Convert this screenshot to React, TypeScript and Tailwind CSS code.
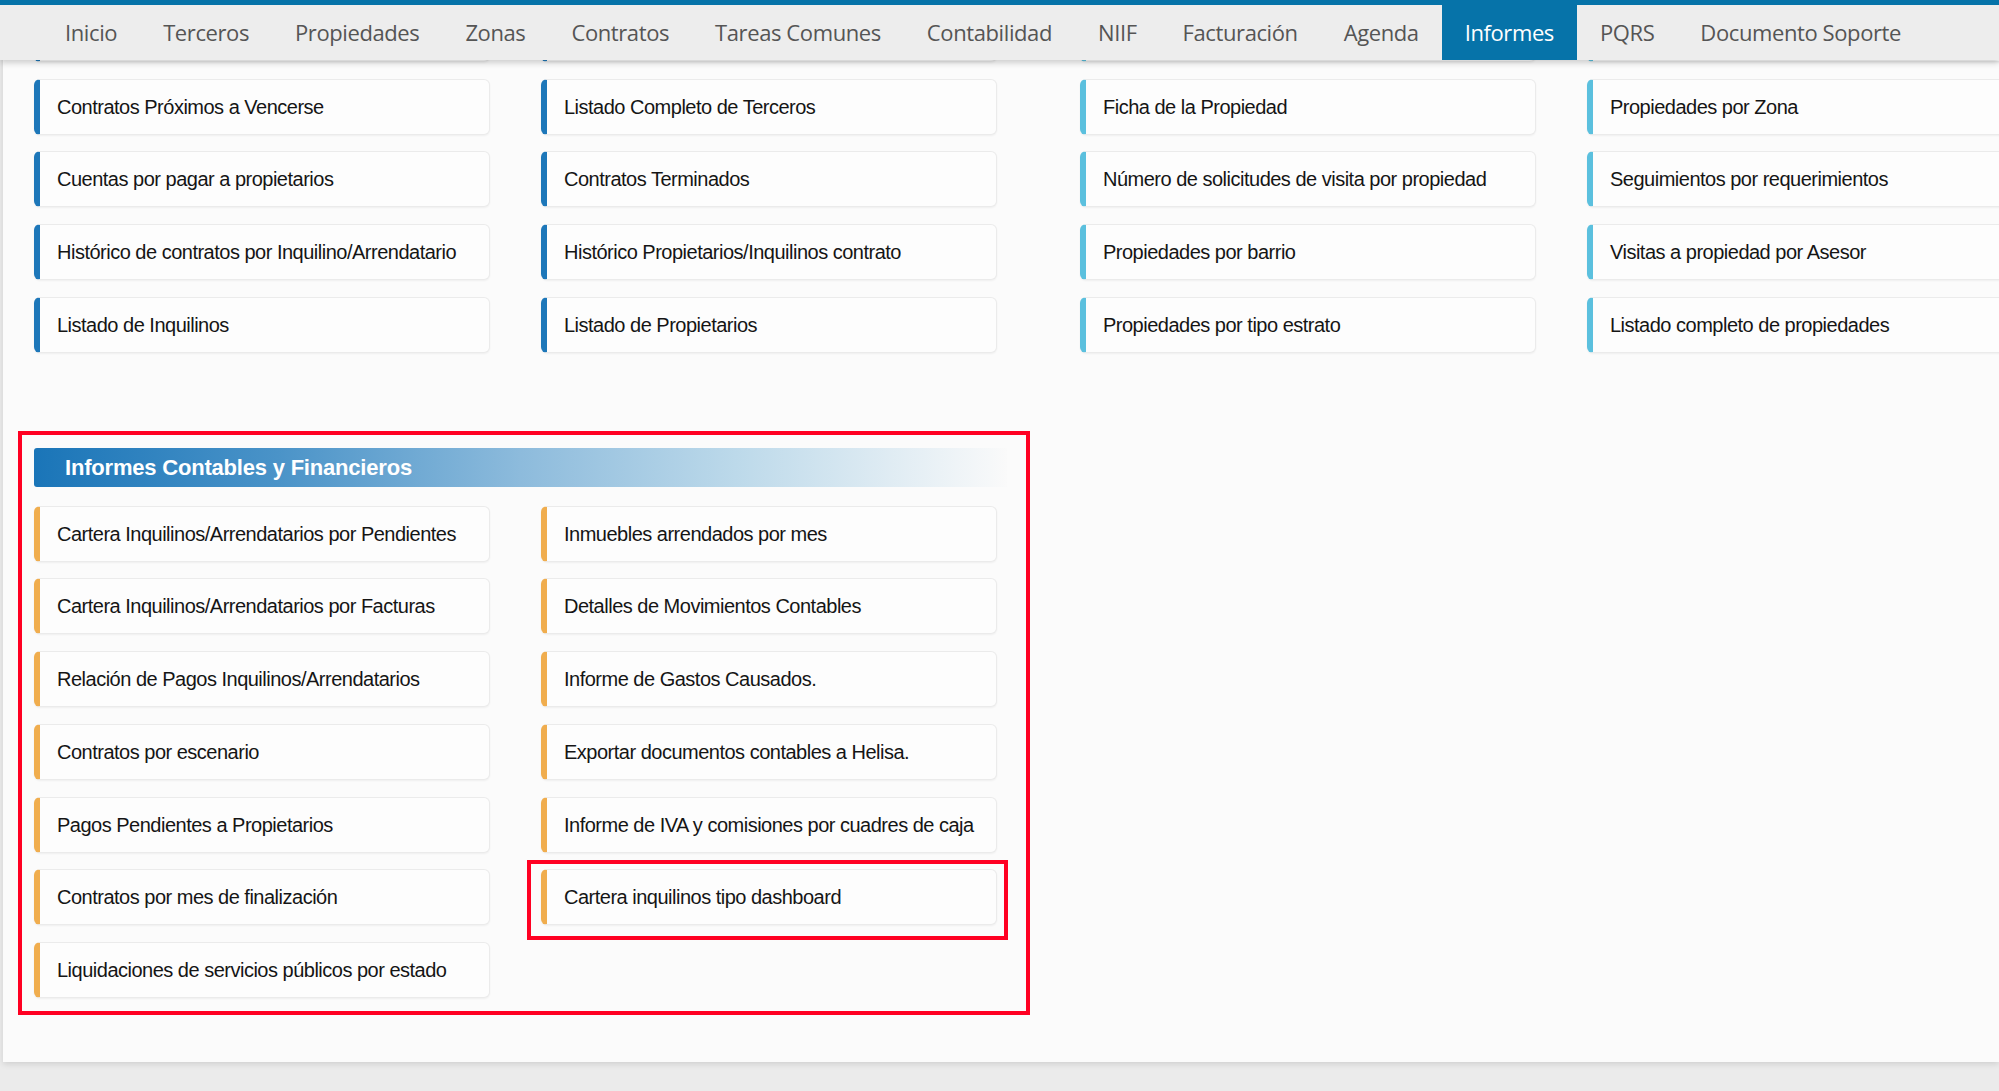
import React from 'react';

const navItems = [
  'Inicio', 'Terceros', 'Propiedades', 'Zonas', 'Contratos', 'Tareas Comunes',
  'Contabilidad', 'NIIF', 'Facturación', 'Agenda', 'Informes', 'PQRS', 'Documento Soporte',
];

// filas del bloque superior (la fila 0 queda oculta bajo la barra, sin texto)
const groupA = [
  [' ', ' '],
  ['Contratos Próximos a Vencerse', 'Listado Completo de Terceros'],
  ['Cuentas por pagar a propietarios', 'Contratos Terminados'],
  ['Histórico de contratos por Inquilino/Arrendatario', 'Histórico Propietarios/Inquilinos contrato'],
  ['Listado de Inquilinos', 'Listado de Propietarios'],
];

const groupB = [
  [' ', ' '],
  ['Ficha de la Propiedad', 'Propiedades por Zona'],
  ['Número de solicitudes de visita por propiedad', 'Seguimientos por requerimientos'],
  ['Propiedades por barrio', 'Visitas a propiedad por Asesor'],
  ['Propiedades por tipo estrato', 'Listado completo de propiedades'],
];

const contables = [
  ['Cartera Inquilinos/Arrendatarios por Pendientes', 'Inmuebles arrendados por mes'],
  ['Cartera Inquilinos/Arrendatarios por Facturas', 'Detalles de Movimientos Contables'],
  ['Relación de Pagos Inquilinos/Arrendatarios', 'Informe de Gastos Causados.'],
  ['Contratos por escenario', 'Exportar documentos contables a Helisa.'],
  ['Pagos Pendientes a Propietarios', 'Informe de IVA y comisiones por cuadres de caja'],
  ['Contratos por mes de finalización', 'Cartera inquilinos tipo dashboard'],
  ['Liquidaciones de servicios públicos por estado', ''],
];

const barColor: Record<string, string> = {
  dark: 'border-l-[#1d77b9]',
  light: 'border-l-[#5bc0de]',
  orange: 'border-l-[#f0ad4e]',
};

const ReportCard = ({ label, tone, marked }: { label: string; tone: string; marked?: boolean }) => (
  <div
    className={`relative h-[56px] flex items-center pl-[17px] bg-[#fdfdfd] border border-[#ebebeb] border-l-[6px] rounded-[6px] shadow-[0_1px_2px_rgba(0,0,0,0.05)] text-[20px] tracking-[-0.5px] text-[#151515] whitespace-nowrap ${barColor[tone]}`}
  >
    {label.trim()}
    {marked && (
      <div className="absolute -left-[20px] -right-[12px] -top-[10px] -bottom-[16px] border-4 border-[#ff0022] pointer-events-none" />
    )}
  </div>
);

const CardGrid = ({ rows, tone }: { rows: string[][]; tone: string }) => (
  <div className="w-[973px] shrink-0 grid grid-cols-[456px_456px] gap-x-[51px] gap-y-[16.7px]">
    {rows.flatMap((row, i) =>
      row.map((label, j) =>
        label ? (
          <ReportCard
            key={`${i}-${j}`}
            label={label}
            tone={tone}
            marked={label === 'Cartera inquilinos tipo dashboard'}
          />
        ) : (
          <div key={`${i}-${j}`} />
        )
      )
    )}
  </div>
);

export default function App() {
  return (
    <div
      className="relative w-[1999px] h-[1091px] overflow-hidden bg-[#ebebeb]"
      style={{ fontFamily: '"Liberation Sans", Arial, sans-serif' }}
    >
      {/* panel principal */}
      <div className="ml-[3px] h-[1062px] bg-[#fbfbfb] shadow-[0_2px_6px_rgba(0,0,0,0.12)] overflow-hidden">
        <div className="pt-[6px] pl-[31px]">
          <div className="flex gap-[73px]">
            <CardGrid rows={groupA} tone="dark" />
            <CardGrid rows={groupB} tone="light" />
          </div>

          {/* Informes Contables y Financieros */}
          <div className="relative w-[973px] mt-[95px]">
            <div className="h-[39px] flex items-center pl-[31px] rounded-l-[3px] bg-[linear-gradient(to_right,#1a75b8_0%,#4a93c8_25%,#8dbbdc_50%,#bcd9ea_72%,#fafafa_100%)]">
              <span className="text-white font-bold text-[22px] tracking-[-0.2px]">Informes Contables y Financieros</span>
            </div>
            <div className="mt-[19px]">
              <CardGrid rows={contables} tone="orange" />
            </div>
            <div className="absolute -left-[16px] -right-[23px] -top-[17px] -bottom-[17px] border-4 border-[#ff0022] pointer-events-none" />
          </div>
        </div>
      </div>

      {/* barra de navegación fija */}
      <div
        className="absolute top-0 left-0 right-0 h-[60px] border-t-[5px] border-[#0673a9] bg-[#ededed] shadow-[0_3px_6px_rgba(0,0,0,0.18)]"
        style={{ fontFamily: '"Open Sans", "Noto Sans", sans-serif' }}
      >
        <ul className="flex h-full pl-[42px]">
          {navItems.map((item) => (
            <li
              key={item}
              className={`flex items-center px-[23px] text-[22px] tracking-[-0.4px] ${
                item === 'Informes' ? 'bg-[#0673a9] text-white -mt-[5px] pt-[5px] h-[60px]' : 'text-[#555]'
              }`}
            >
              {item}
            </li>
          ))}
        </ul>
      </div>
    </div>
  );
}
